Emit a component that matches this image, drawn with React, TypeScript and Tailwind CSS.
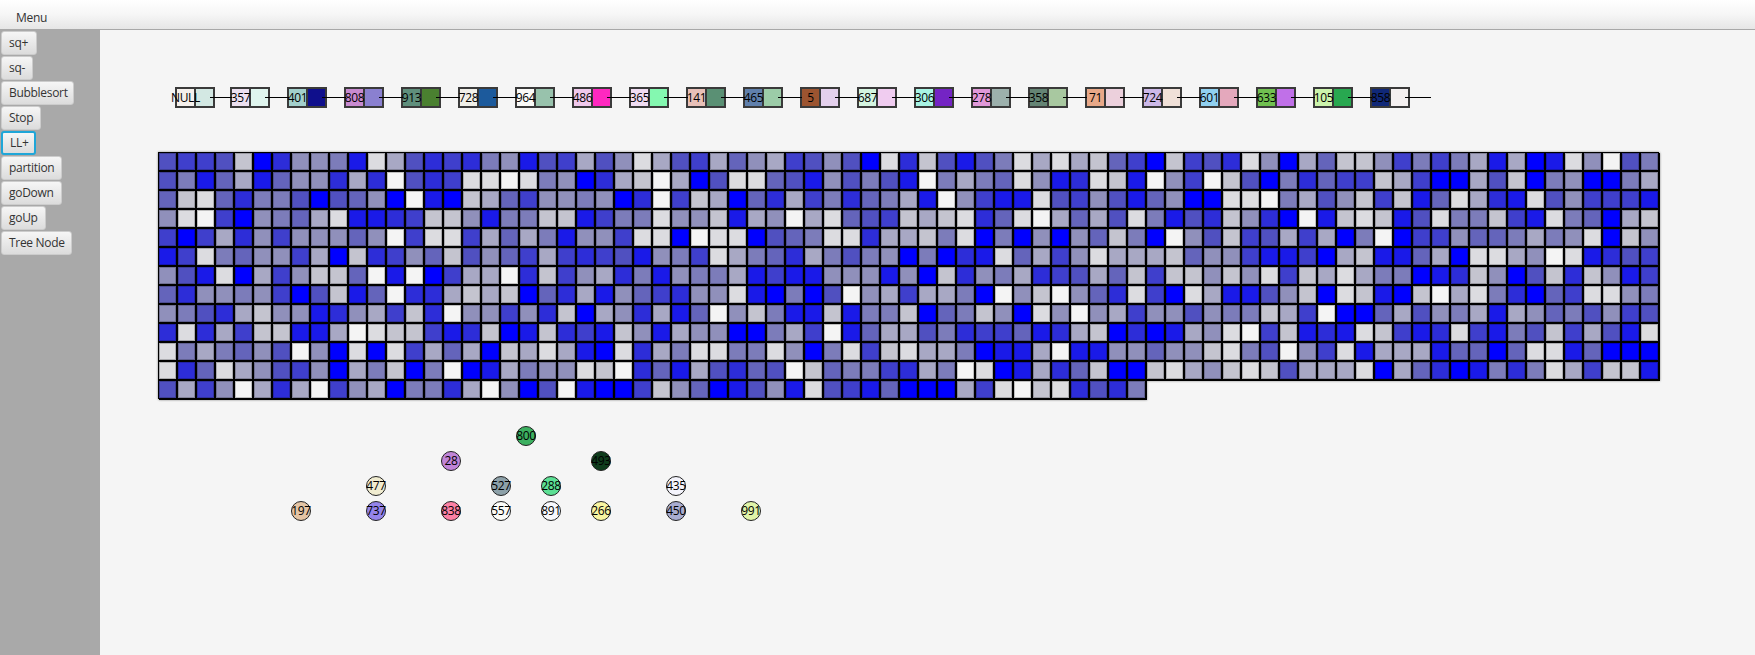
import React from "react";

const sideButtons = [
  { label: "sq+", width: "w-[36px]" },
  { label: "sq-", width: "w-[32px]" },
  { label: "Bubblesort", width: "w-[73px]" },
  { label: "Stop", width: "w-[40px]" },
  { label: "LL+", width: "w-[35px]", focused: true },
  { label: "partition", width: "w-[61px]" },
  { label: "goDown", width: "w-[61px]" },
  { label: "goUp", width: "w-[45px]" },
  { label: "Tree Node", width: "w-[71px]" },
];

const listNodes = [
  { label: "NULL", data: "bg-[#f5f0ec]", next: "bg-[#d3e8e3]" },
  { label: "357", data: "bg-[#ece0f0]", next: "bg-[#dff5ee]" },
  { label: "401", data: "bg-[#a3d0cc]", next: "bg-[#0f0f8c]" },
  { label: "808", data: "bg-[#c88ad0]", next: "bg-[#8a80d0]" },
  { label: "913", data: "bg-[#5f8f7c]", next: "bg-[#4a8030]" },
  { label: "728", data: "bg-[#f0efe8]", next: "bg-[#1c5a9c]" },
  { label: "964", data: "bg-[#fafaf8]", next: "bg-[#98c2ac]" },
  { label: "486", data: "bg-[#f0c8ec]", next: "bg-[#ff28c0]" },
  { label: "365", data: "bg-[#f0dcf2]", next: "bg-[#84f8b0]" },
  { label: "141", data: "bg-[#e8c0b8]", next: "bg-[#5a9074]" },
  { label: "465", data: "bg-[#6080ac]", next: "bg-[#9ccca8]" },
  { label: "5", data: "bg-[#9c5430]", next: "bg-[#e4d0ec]" },
  { label: "687", data: "bg-[#d4f4e0]", next: "bg-[#f0ccf0]" },
  { label: "306", data: "bg-[#a8f4e4]", next: "bg-[#7424c4]" },
  { label: "278", data: "bg-[#e098d8]", next: "bg-[#9cb0ac]" },
  { label: "358", data: "bg-[#648474]", next: "bg-[#a8c8a0]" },
  { label: "71", data: "bg-[#e8a888]", next: "bg-[#ecd0dc]" },
  { label: "724", data: "bg-[#ccb8e8]", next: "bg-[#f0e0d8]" },
  { label: "601", data: "bg-[#90d0f0]", next: "bg-[#e4a8bc]" },
  { label: "633", data: "bg-[#70c050]", next: "bg-[#c070e8]" },
  { label: "105", data: "bg-[#ccf4ac]", next: "bg-[#28a850]" },
  { label: "858", data: "bg-[#102878]", next: "bg-[#f4f0f0]" },
];

// one char per square, from pure blue (0) up to near white (b)
const shades: Record<string, string> = {
  "0": "bg-[#0000ff]",
  "1": "bg-[#1a1ae8]",
  "2": "bg-[#2d2dd8]",
  "3": "bg-[#3f3fcc]",
  "4": "bg-[#5050c0]",
  "5": "bg-[#6464bb]",
  "6": "bg-[#7c7cba]",
  "7": "bg-[#9090bb]",
  "8": "bg-[#a8a8c4]",
  "9": "bg-[#c4c4cf]",
  a: "bg-[#dcdce0]",
  b: "bg-[#f4f4f4]",
};

const squares = [
  "43349027761a8423267143847a" + "843857834740a294146a8a8953" + "09342a7085997363681801a7b46",
  "461581577282b423aaba670289" + "b804aa54174641b6865a712a91" + "b73b94062533983008490670068",
  "59a5266404570b109853776702" + "b39805283625681b7311a43741" + "5700aab684793915a821a473331",
  "7ab307658a1123997166991366" + "a779187b8a543989a25ab8584a" + "61429720b19a914a66931a65089",
  "303827377757b3aa385861773a" + "a0baa0456aa28896a060707596" + "0b7493483806b0337556867a097",
  "13a65773809237594753832341" + "763a86528646706021a5837a88" + "89577311308911580aa87ba1243",
  "741a0837995b1b0388b2937826" + "17668131177717092768234859" + "399797a398a8660129704929713",
  "527767304915b2289890528175" + "3277a10604b7838860b79b752a" + "30a8114790a9109b8a62053aa76",
  "764289771278392b7737290872" + "815b7961191669056970a7b783" + "774766983b00584768187564734",
  "2a28399118ba99312901923197" + "187700683b1588462335128902" + "0187ab39121a9312a316493841a",
  "a686574b70a0a3858098a810a2" + "86aa66a706a39a8860118b1177" + "5779a64b73a188815505aa15000",
  "a25a87437086906b018677a9b2" + "5184254b95663286ba01825900" + "9a879a94888a085201626a83991",
  "4837b828b37806628b704b1003" + "97501471a431500083ab9a2426",
];

const treeNodes = [
  { label: "800", x: 526, y: 436, color: "bg-[#3cb060]" },
  { label: "28", x: 451, y: 461, color: "bg-[#c084d8]" },
  { label: "493", x: 601, y: 461, color: "bg-[#0f3c1c]" },
  { label: "477", x: 376, y: 486, color: "bg-[#f0ecd0]" },
  { label: "527", x: 501, y: 486, color: "bg-[#8ca0a8]" },
  { label: "288", x: 551, y: 486, color: "bg-[#5ce094]" },
  { label: "435", x: 676, y: 486, color: "bg-[#f4f4fc]" },
  { label: "197", x: 301, y: 511, color: "bg-[#e4c4a4]" },
  { label: "737", x: 376, y: 511, color: "bg-[#9484ea]" },
  { label: "838", x: 451, y: 511, color: "bg-[#fc80a4]" },
  { label: "557", x: 501, y: 511, color: "bg-[#fcfcf8]" },
  { label: "891", x: 551, y: 511, color: "bg-[#f8f8fc]" },
  { label: "266", x: 601, y: 511, color: "bg-[#f8f4a0]" },
  { label: "450", x: 676, y: 511, color: "bg-[#a8acd0]" },
  { label: "991", x: 751, y: 511, color: "bg-[#e0f4a8]" },
];

function ListNode({ node, index }: { node: (typeof listNodes)[number]; index: number }) {
  const first = index === 0;
  const last = index === listNodes.length - 1;
  return (
    <div className={`relative flex w-[40px] shrink-0 ${first ? "mr-[15px]" : "mr-[17px]"}`}>
      <div className={`h-[21px] w-[21px] border-2 border-[#3a3a3a] ${node.data}`} />
      <div className={`-ml-[2px] h-[21px] w-[21px] border-2 border-[#3a3a3a] ${node.next}`} />
      <div
        className={`absolute left-[35px] top-[10px] z-10 h-px bg-black ${
          first ? "w-[22px]" : last ? "w-[26px]" : "w-[24px]"
        }`}
      />
      <span className="absolute left-0 top-0 z-20 flex h-[21px] w-[21px] items-center justify-center whitespace-nowrap text-[12px] tracking-[-0.3px] text-black">
        {node.label}
      </span>
    </div>
  );
}

export default function App() {
  return (
    <div className="flex h-screen flex-col overflow-hidden font-['Open_Sans',sans-serif]">
      <div className="flex h-[30px] shrink-0 items-center border-b border-[#a8a8a8] bg-gradient-to-b from-white via-[#f6f6f6] to-[#e6e6e6] pl-[16px] pt-[6px] text-[12px] tracking-[-0.3px] text-[#333]">
        Menu
      </div>
      <div className="flex flex-1">
        <div className="flex w-[100px] shrink-0 flex-col items-start gap-px bg-[#a9a9a9] pl-px pt-px">
          {sideButtons.map((button) => (
            <button
              key={button.label}
              className={`h-[24px] rounded-[3px] bg-gradient-to-b from-[#f6f6f6] to-[#dcdcdc] pl-[7px] text-left text-[12px] tracking-[-0.3px] text-[#333] ${button.width} ${
                button.focused ? "border-2 border-[#1fa6d8]" : "border border-[#cccccc]"
              }`}
            >
              {button.label}
            </button>
          ))}
        </div>
        <div className="flex flex-1 flex-col bg-[#f5f5f5]">
          <div className="ml-[75px] mt-[57px] flex">
            {listNodes.map((node, index) => (
              <ListNode key={node.label + index} node={node} index={index} />
            ))}
          </div>
          <div className="ml-[59px] mt-[45px] grid grid-cols-[repeat(79,19px)] drop-shadow-[0_0_1px_#888]">
            {squares.flatMap((row, rowIndex) =>
              row.split("").map((shade, colIndex) => (
                <div
                  key={`${rowIndex}-${colIndex}`}
                  className={`h-[19px] w-[19px] border-b-2 border-r-2 border-black shadow-[-1px_-1px_0_0_#000,inset_0_0_0_1px_rgba(0,0,0,0.22)] ${shades[shade]}`}
                />
              ))
            )}
          </div>
          <div className="relative flex-1">
            {treeNodes.map((node) => (
              <div
                key={node.label}
                className={`absolute flex h-[20px] w-[20px] items-center justify-center whitespace-nowrap rounded-full border border-[#222] text-[12px] tracking-[-0.3px] text-black ${node.color}`}
                style={{ left: node.x - 110, top: node.y - 410 }}
              >
                {node.label}
              </div>
            ))}
          </div>
        </div>
      </div>
    </div>
  );
}
